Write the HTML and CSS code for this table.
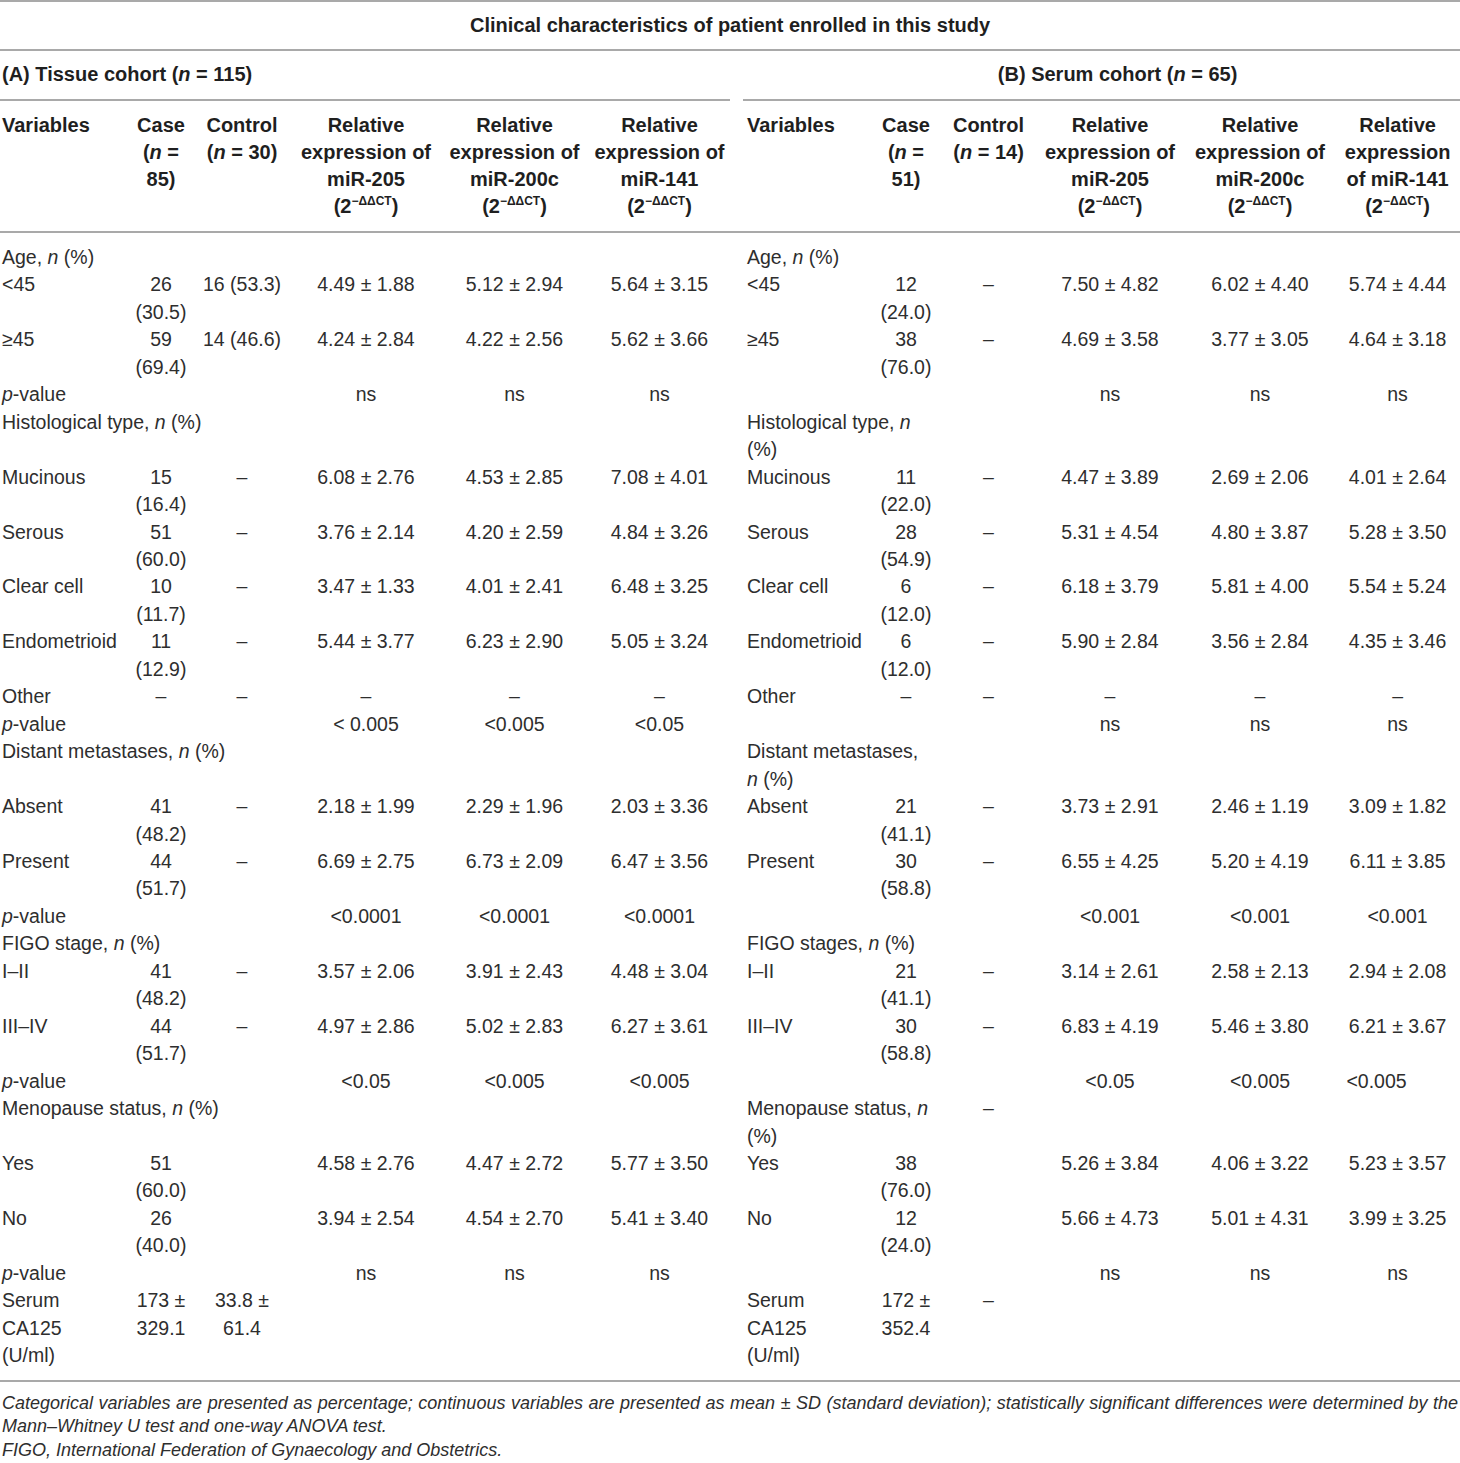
FILE: index.html
```html
<!DOCTYPE html>
<html lang="en">
<head>
<meta charset="utf-8">
<title>Clinical characteristics</title>
<link rel="stylesheet" href="styles.css">
</head>
<body>
<table class="tbl">
  <colgroup>
    <col class="w-var-l"><col class="w-case-l"><col class="w-ctl-l"><col class="w-205-l"><col class="w-200-l"><col class="w-141-l">
    <col class="w-gap">
    <col class="w-var-r"><col class="w-case-r"><col class="w-ctl-r"><col class="w-205-r"><col class="w-200-r"><col class="w-141-r">
  </colgroup>
  <thead>
    <tr class="title-row"><th colspan="13">Clinical characteristics of patient enrolled in this study</th></tr>
    <tr class="cohort-row">
      <th colspan="6" class="coh-a">(A) Tissue cohort (<i>n</i> = 115)</th>
      <th class="gap"></th>
      <th colspan="6" class="coh-b">(B) Serum cohort (<i>n</i> = 65)</th>
    </tr>
    <tr class="head-row">
      <th class="var">Variables</th>
      <th>Case<br>(<i>n</i> =<br>85)</th>
      <th>Control<br>(<i>n</i> = 30)</th>
      <th>Relative<br>expression of<br>miR-205<br>(2<sup>−ΔΔCT</sup>)</th>
      <th>Relative<br>expression of<br>miR-200c<br>(2<sup>−ΔΔCT</sup>)</th>
      <th>Relative<br>expression of<br>miR-141<br>(2<sup>−ΔΔCT</sup>)</th>
      <th class="gap"></th>
      <th class="var">Variables</th>
      <th>Case<br>(<i>n</i> =<br>51)</th>
      <th>Control<br>(<i>n</i> = 14)</th>
      <th>Relative<br>expression of<br>miR-205<br>(2<sup>−ΔΔCT</sup>)</th>
      <th>Relative<br>expression of<br>miR-200c<br>(2<sup>−ΔΔCT</sup>)</th>
      <th>Relative<br>expression<br>of miR-141<br>(2<sup>−ΔΔCT</sup>)</th>
    </tr>
  </thead>
  <tbody>
    <tr class="first">
      <td class="var" colspan="3">Age, <i>n</i> (%)</td><td></td><td></td><td></td>
      <td class="gap"></td>
      <td class="var" colspan="3">Age, <i>n</i> (%)</td><td></td><td></td><td></td>
    </tr>
    <tr>
      <td class="var">&lt;45</td><td>26<br>(30.5)</td><td>16 (53.3)</td><td>4.49 ± 1.88</td><td>5.12 ± 2.94</td><td>5.64 ± 3.15</td>
      <td class="gap"></td>
      <td class="var">&lt;45</td><td>12<br>(24.0)</td><td>–</td><td>7.50 ± 4.82</td><td>6.02 ± 4.40</td><td>5.74 ± 4.44</td>
    </tr>
    <tr>
      <td class="var">≥45</td><td>59<br>(69.4)</td><td>14 (46.6)</td><td>4.24 ± 2.84</td><td>4.22 ± 2.56</td><td>5.62 ± 3.66</td>
      <td class="gap"></td>
      <td class="var">≥45</td><td>38<br>(76.0)</td><td>–</td><td>4.69 ± 3.58</td><td>3.77 ± 3.05</td><td>4.64 ± 3.18</td>
    </tr>
    <tr>
      <td class="var"><i>p</i>-value</td><td></td><td></td><td>ns</td><td>ns</td><td>ns</td>
      <td class="gap"></td>
      <td class="var"></td><td></td><td></td><td>ns</td><td>ns</td><td>ns</td>
    </tr>
    <tr>
      <td class="var" colspan="3">Histological type, <i>n</i> (%)</td><td></td><td></td><td></td>
      <td class="gap"></td>
      <td class="var" colspan="2">Histological type, <i>n</i><br>(%)</td><td></td><td></td><td></td><td></td>
    </tr>
    <tr>
      <td class="var">Mucinous</td><td>15<br>(16.4)</td><td>–</td><td>6.08 ± 2.76</td><td>4.53 ± 2.85</td><td>7.08 ± 4.01</td>
      <td class="gap"></td>
      <td class="var">Mucinous</td><td>11<br>(22.0)</td><td>–</td><td>4.47 ± 3.89</td><td>2.69 ± 2.06</td><td>4.01 ± 2.64</td>
    </tr>
    <tr>
      <td class="var">Serous</td><td>51<br>(60.0)</td><td>–</td><td>3.76 ± 2.14</td><td>4.20 ± 2.59</td><td>4.84 ± 3.26</td>
      <td class="gap"></td>
      <td class="var">Serous</td><td>28<br>(54.9)</td><td>–</td><td>5.31 ± 4.54</td><td>4.80 ± 3.87</td><td>5.28 ± 3.50</td>
    </tr>
    <tr>
      <td class="var">Clear cell</td><td>10<br>(11.7)</td><td>–</td><td>3.47 ± 1.33</td><td>4.01 ± 2.41</td><td>6.48 ± 3.25</td>
      <td class="gap"></td>
      <td class="var">Clear cell</td><td>6<br>(12.0)</td><td>–</td><td>6.18 ± 3.79</td><td>5.81 ± 4.00</td><td>5.54 ± 5.24</td>
    </tr>
    <tr>
      <td class="var">Endometrioid</td><td>11<br>(12.9)</td><td>–</td><td>5.44 ± 3.77</td><td>6.23 ± 2.90</td><td>5.05 ± 3.24</td>
      <td class="gap"></td>
      <td class="var">Endometrioid</td><td>6<br>(12.0)</td><td>–</td><td>5.90 ± 2.84</td><td>3.56 ± 2.84</td><td>4.35 ± 3.46</td>
    </tr>
    <tr>
      <td class="var">Other</td><td>–</td><td>–</td><td>–</td><td>–</td><td>–</td>
      <td class="gap"></td>
      <td class="var">Other</td><td>–</td><td>–</td><td>–</td><td>–</td><td>–</td>
    </tr>
    <tr>
      <td class="var"><i>p</i>-value</td><td></td><td></td><td>&lt; 0.005</td><td>&lt;0.005</td><td>&lt;0.05</td>
      <td class="gap"></td>
      <td class="var"></td><td></td><td></td><td>ns</td><td>ns</td><td>ns</td>
    </tr>
    <tr>
      <td class="var" colspan="3">Distant metastases, <i>n</i> (%)</td><td></td><td></td><td></td>
      <td class="gap"></td>
      <td class="var" colspan="2">Distant metastases,<br><i>n</i> (%)</td><td></td><td></td><td></td><td></td>
    </tr>
    <tr>
      <td class="var">Absent</td><td>41<br>(48.2)</td><td>–</td><td>2.18 ± 1.99</td><td>2.29 ± 1.96</td><td>2.03 ± 3.36</td>
      <td class="gap"></td>
      <td class="var">Absent</td><td>21<br>(41.1)</td><td>–</td><td>3.73 ± 2.91</td><td>2.46 ± 1.19</td><td>3.09 ± 1.82</td>
    </tr>
    <tr>
      <td class="var">Present</td><td>44<br>(51.7)</td><td>–</td><td>6.69 ± 2.75</td><td>6.73 ± 2.09</td><td>6.47 ± 3.56</td>
      <td class="gap"></td>
      <td class="var">Present</td><td>30<br>(58.8)</td><td>–</td><td>6.55 ± 4.25</td><td>5.20 ± 4.19</td><td>6.11 ± 3.85</td>
    </tr>
    <tr>
      <td class="var"><i>p</i>-value</td><td></td><td></td><td>&lt;0.0001</td><td>&lt;0.0001</td><td>&lt;0.0001</td>
      <td class="gap"></td>
      <td class="var"></td><td></td><td></td><td>&lt;0.001</td><td>&lt;0.001</td><td>&lt;0.001</td>
    </tr>
    <tr>
      <td class="var" colspan="3">FIGO stage, <i>n</i> (%)</td><td></td><td></td><td></td>
      <td class="gap"></td>
      <td class="var" colspan="2">FIGO stages, <i>n</i> (%)</td><td></td><td></td><td></td><td></td>
    </tr>
    <tr>
      <td class="var">I–II</td><td>41<br>(48.2)</td><td>–</td><td>3.57 ± 2.06</td><td>3.91 ± 2.43</td><td>4.48 ± 3.04</td>
      <td class="gap"></td>
      <td class="var">I–II</td><td>21<br>(41.1)</td><td>–</td><td>3.14 ± 2.61</td><td>2.58 ± 2.13</td><td>2.94 ± 2.08</td>
    </tr>
    <tr>
      <td class="var">III–IV</td><td>44<br>(51.7)</td><td>–</td><td>4.97 ± 2.86</td><td>5.02 ± 2.83</td><td>6.27 ± 3.61</td>
      <td class="gap"></td>
      <td class="var">III–IV</td><td>30<br>(58.8)</td><td>–</td><td>6.83 ± 4.19</td><td>5.46 ± 3.80</td><td>6.21 ± 3.67</td>
    </tr>
    <tr>
      <td class="var"><i>p</i>-value</td><td></td><td></td><td>&lt;0.05</td><td>&lt;0.005</td><td>&lt;0.005</td>
      <td class="gap"></td>
      <td class="var"></td><td></td><td></td><td>&lt;0.05</td><td>&lt;0.005</td><td class="shift">&lt;0.005</td>
    </tr>
    <tr>
      <td class="var" colspan="3">Menopause status, <i>n</i> (%)</td><td></td><td></td><td></td>
      <td class="gap"></td>
      <td class="var" colspan="2">Menopause status, <i>n</i><br>(%)</td><td>–</td><td></td><td></td><td></td>
    </tr>
    <tr>
      <td class="var">Yes</td><td>51<br>(60.0)</td><td></td><td>4.58 ± 2.76</td><td>4.47 ± 2.72</td><td>5.77 ± 3.50</td>
      <td class="gap"></td>
      <td class="var">Yes</td><td>38<br>(76.0)</td><td></td><td>5.26 ± 3.84</td><td>4.06 ± 3.22</td><td>5.23 ± 3.57</td>
    </tr>
    <tr>
      <td class="var">No</td><td>26<br>(40.0)</td><td></td><td>3.94 ± 2.54</td><td>4.54 ± 2.70</td><td>5.41 ± 3.40</td>
      <td class="gap"></td>
      <td class="var">No</td><td>12<br>(24.0)</td><td></td><td>5.66 ± 4.73</td><td>5.01 ± 4.31</td><td>3.99 ± 3.25</td>
    </tr>
    <tr>
      <td class="var"><i>p</i>-value</td><td></td><td></td><td>ns</td><td>ns</td><td>ns</td>
      <td class="gap"></td>
      <td class="var"></td><td></td><td></td><td>ns</td><td>ns</td><td>ns</td>
    </tr>
    <tr class="last">
      <td class="var">Serum<br>CA125<br>(U/ml)</td><td>173 ±<br>329.1</td><td>33.8 ±<br>61.4</td><td></td><td></td><td></td>
      <td class="gap"></td>
      <td class="var">Serum<br>CA125<br>(U/ml)</td><td>172 ±<br>352.4</td><td>–</td><td></td><td></td><td></td>
    </tr>
  </tbody>
</table>
<p class="note">Categorical variables are presented as percentage; continuous variables are presented as mean ± SD (standard deviation); statistically significant differences were determined by the Mann–Whitney U test and one-way ANOVA test.<br>FIGO, International Federation of Gynaecology and Obstetrics.</p>
</body>
</html>
```

FILE: styles.css
```css
html, body {
  margin: 0;
  padding: 0;
  background: #ffffff;
}

body {
  width: 1460px;
  font-family: "Liberation Sans", Arial, sans-serif;
  color: #2e2e2e;
}

.tbl {
  width: 1460px;
  table-layout: fixed;
  border-collapse: separate;
  border-spacing: 0;
  border-top: 2px solid #a9a9a9;
  font-size: 19.5px;
}

.w-var-l { width: 130px; }
.w-case-l { width: 62px; }
.w-ctl-l { width: 100px; }
.w-205-l { width: 148px; }
.w-200-l { width: 149px; }
.w-141-l { width: 141px; }
.w-gap { width: 13px; }
.w-var-r { width: 127px; }
.w-case-r { width: 72px; }
.w-ctl-r { width: 93px; }
.w-205-r { width: 150px; }
.w-200-r { width: 150px; }
.w-141-r { width: 125px; }

th {
  font-weight: bold;
  color: #1f1f1f;
  font-size: 20px;
  padding: 0;
  text-align: center;
  vertical-align: top;
  white-space: nowrap;
}

.title-row th {
  padding: 10px 0 10px;
  line-height: 27px;
  border-bottom: 2px solid #a9a9a9;
}

.cohort-row th {
  padding: 10px 0 11px;
  line-height: 27px;
  border-bottom: 2px solid #a9a9a9;
}

.cohort-row th.gap {
  border-bottom: none;
}

.coh-a {
  text-align: left;
  padding-left: 2px !important;
}

.coh-b {
  text-align: center;
  padding-left: 32px !important;
}

.head-row th {
  padding: 11px 0 11px;
  line-height: 27px;
  border-bottom: 2px solid #a9a9a9;
}

.head-row th.var {
  text-align: left;
  padding-left: 2px;
}

.head-row th:nth-child(8) {
  padding-left: 4px;
}

sup {
  font-size: 12px;
  line-height: 0;
  vertical-align: 8px;
}

td {
  padding: 0;
  line-height: 27.45px;
  text-align: center;
  vertical-align: top;
  white-space: nowrap;
}

td.var {
  text-align: left;
  padding-left: 2px;
}

td.gap + td.var {
  padding-left: 4px;
}

.first td {
  padding-top: 11px;
}

.last td {
  padding-bottom: 10px;
  border-bottom: 2px solid #a9a9a9;
}

td.shift {
  padding-right: 42px;
}

.note {
  margin: 0;
  padding: 10px 2px 0 2px;
  font-style: italic;
  font-size: 18px;
  line-height: 23.5px;
  text-align: justify;
  color: #2e2e2e;
}
```
